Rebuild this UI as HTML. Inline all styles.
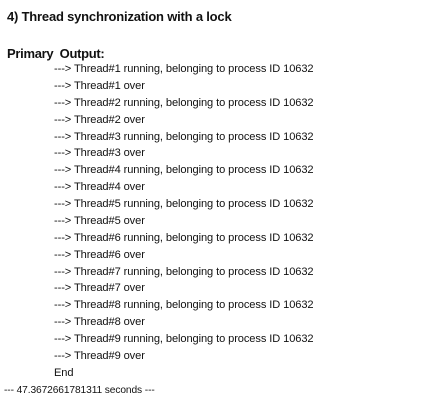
<!DOCTYPE html>
<html><head><style>
body{margin:0;background:#fff;width:423px;height:414px;overflow:hidden;font-family:"Liberation Sans",Arial,sans-serif;color:#111;}
.t{position:absolute;left:7px;top:9px;font-weight:bold;font-size:13px;letter-spacing:-0.2px;}
.p{position:absolute;left:7px;top:46px;font-weight:bold;font-size:13px;letter-spacing:-0.3px;word-spacing:3px;}
.l{position:absolute;left:54px;font-size:11.1px;letter-spacing:-0.1px;white-space:pre;}
</style></head><body>
<div class="t">4) Thread synchronization with a lock</div>
<div class="p">Primary Output:</div>
<div class="l" style="top:63px">---&gt; Thread#1 running, belonging to process ID 10632</div>
<div class="l" style="top:80px">---&gt; Thread#1 over</div>
<div class="l" style="top:97px">---&gt; Thread#2 running, belonging to process ID 10632</div>
<div class="l" style="top:114px">---&gt; Thread#2 over</div>
<div class="l" style="top:131px">---&gt; Thread#3 running, belonging to process ID 10632</div>
<div class="l" style="top:147px">---&gt; Thread#3 over</div>
<div class="l" style="top:164px">---&gt; Thread#4 running, belonging to process ID 10632</div>
<div class="l" style="top:181px">---&gt; Thread#4 over</div>
<div class="l" style="top:198px">---&gt; Thread#5 running, belonging to process ID 10632</div>
<div class="l" style="top:215px">---&gt; Thread#5 over</div>
<div class="l" style="top:232px">---&gt; Thread#6 running, belonging to process ID 10632</div>
<div class="l" style="top:249px">---&gt; Thread#6 over</div>
<div class="l" style="top:266px">---&gt; Thread#7 running, belonging to process ID 10632</div>
<div class="l" style="top:282px">---&gt; Thread#7 over</div>
<div class="l" style="top:299px">---&gt; Thread#8 running, belonging to process ID 10632</div>
<div class="l" style="top:316px">---&gt; Thread#8 over</div>
<div class="l" style="top:333px">---&gt; Thread#9 running, belonging to process ID 10632</div>
<div class="l" style="top:350px">---&gt; Thread#9 over</div>
<div class="l" style="top:367px">End</div>
<div class="l" style="top:385px;left:4px;font-size:10.2px">--- 47.3672661781311 seconds ---</div>
</body></html>
